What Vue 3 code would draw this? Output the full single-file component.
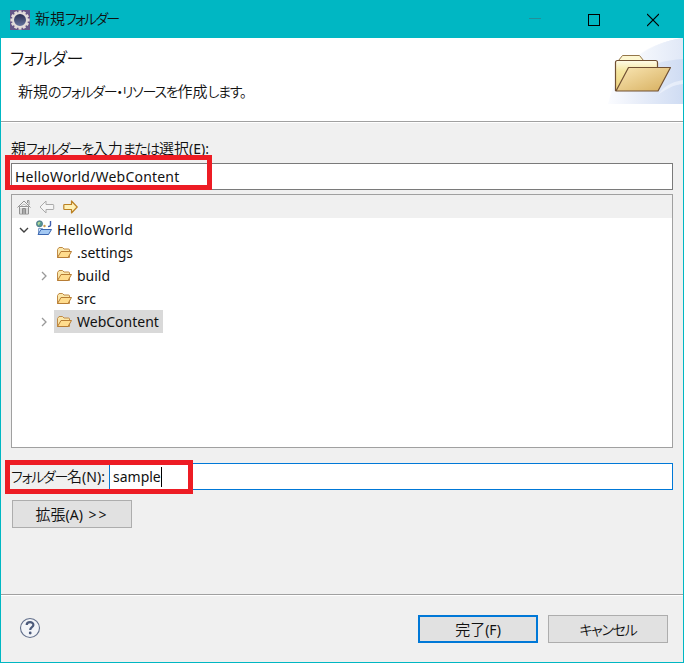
<script setup>
const rows = [
  { name: '.settings', open: false },
  { name: 'build', open: true },
  { name: 'src', open: false },
  { name: 'WebContent', open: true, selected: true },
]
const teeth = Array.from({ length: 12 }, (_, i) => i * 30)
</script>

<template>
  <div class="dialog">
    <header class="titlebar">
      <svg class="appicon" width="20" height="20" viewBox="0 0 20 20">
        <defs>
          <linearGradient id="lens" x1="0" y1="0" x2="0" y2="1">
            <stop offset="0" stop-color="#252a4c" /><stop offset="1" stop-color="#6878a4" />
          </linearGradient>
        </defs>
        <rect width="20" height="20" fill="#655788" />
        <rect v-for="a in teeth" :key="a" x="8.5" y="0.4" width="3" height="4" fill="#e2dcda" :transform="`rotate(${a} 10 10)`" />
        <circle cx="10" cy="10" r="7" fill="url(#lens)" stroke="#e2dcda" stroke-width="2" />
      </svg>
      <span class="title">新規<span class="kana">フォルダー</span></span>
      <div class="controls">
        <svg width="12" height="14" viewBox="0 0 12 14"><path d="M0 5.500h12" stroke="#238f99" /></svg>
        <svg width="12" height="14" viewBox="0 0 12 14"><rect x=".5" y="1.500" width="11" height="11" fill="none" stroke="#000" /></svg>
        <svg width="12" height="14" viewBox="0 0 12 14"><path d="M0 1l12 12M12 1L0 13" stroke="#000" stroke-width="1.100" /></svg>
      </div>
    </header>

    <section class="banner">
      <div class="banner-text">
        <div class="heading">フォルダー</div>
        <div class="description">新規<span class="kana">のフォルダー・リソースを</span>作成<span class="kana">します。</span></div>
      </div>
      <svg class="banner-art" width="75" height="66" viewBox="0 0 75 66">
        <defs>
          <linearGradient id="sky" x1="0" y1="0" x2="1" y2="0">
            <stop offset="0" stop-color="#fbfcff" /><stop offset=".4" stop-color="#e9eef9" /><stop offset="1" stop-color="#cfdcf3" />
          </linearGradient>
          <linearGradient id="sheen" x1="0" y1="0" x2="1" y2="0">
            <stop offset="0" stop-color="#fff" /><stop offset="1" stop-color="#e6ecf8" />
          </linearGradient>
          <linearGradient id="back" x1="0" y1="0" x2="0" y2="1">
            <stop offset="0" stop-color="#fffce9" /><stop offset=".35" stop-color="#f5e6a0" /><stop offset="1" stop-color="#eed27e" />
          </linearGradient>
          <linearGradient id="front" x1="0" y1="0" x2="1" y2="1">
            <stop offset="0" stop-color="#fae7b5" /><stop offset="1" stop-color="#d6ae5d" />
          </linearGradient>
        </defs>
        <path d="M0 66C8 30 35 6 75 0v66z" fill="url(#sky)" />
        <path d="M20 25C38 9 55 3 75 0v21C57 22 42 26 25 37z" fill="url(#sheen)" opacity=".75" />
        <path d="M50 57C55 49 63 44 75 42v4c-10 1-17 5-25 11z" fill="#f4f7fd" opacity=".6" />
        <path d="M10.500 22.500l4-5h17l4 5z" fill="#fdf7d1" stroke="#94764a" />
        <path d="M7.500 52.500V24.500q0-2 2-2h38q2 0 2 2v28z" fill="url(#back)" stroke="#715033" stroke-width="1.200" />
        <path d="M8 53L20.500 29.500h42L50 53z" fill="url(#front)" stroke="#715033" stroke-width="1.200" stroke-linejoin="round" />
      </svg>
    </section>

    <main class="content">
      <div class="parent-label">親<span class="kana">フォルダーを</span>入力<span class="kana">または</span>選択<span class="latin">(E):</span></div>
      <div class="field parent-field">HelloWorld/WebContent<div class="mark mark-parent"></div></div>

      <div class="tree">
        <div class="toolbar">
          <svg width="16" height="16" viewBox="0 0 16 16">
            <path d="M3.500 15V7.500h9V15zM1.500 8.500L8 2l6.500 6.500M11.500 4V1.500h1.500V6" fill="#f6f6f6" stroke="#929292" />
            <path d="M6.500 15V9.500h3V15" fill="#aaa" stroke="#8b8b8b" /><path d="M5 7l3-2 3 2M5 9v5M11 9v5" fill="none" stroke="#bbb" />
          </svg>
          <svg width="16" height="16" viewBox="0 0 16 16"><path d="M1 8L7 2v3.500h7q.7 0 .7.700v3.600q0 .700-.7.700H7V14z" fill="#f5f5f5" stroke="#aaa" stroke-linejoin="round" /></svg>
          <svg width="16" height="16" viewBox="0 0 16 16"><path d="M15.200 8L9.500 2v3.500h-7q-.7 0-.7.700v3.600q0 .700.7.700h7V14z" fill="#fff1b7" stroke="#bb8123" stroke-width="1.200" stroke-linejoin="round" /></svg>
        </div>
        <div class="row root">
          <svg class="chevron" width="10" height="10" viewBox="0 0 10 10"><path d="M1 3l4 4 4-4" fill="none" stroke="#404040" stroke-width="1.400" /></svg>
          <svg class="project" width="16" height="16" viewBox="0 0 16 16">
            <path d="M2.500 14V8.500h4l1 1h5V14z" fill="#d6e7ff" stroke="#7d9dcb" />
            <path d="M2 14.500L5 9.500h10.500l-3 5z" fill="#a4c9f3" stroke="#3b66b0" stroke-linejoin="round" />
            <circle cx="3.500" cy="3.800" r="3.100" fill="#57978f" stroke="#436a88" stroke-width=".7" />
            <path d="M1.500 3.300q1-2 3-1l-1 2-1 1z" fill="#b4d89a" />
            <circle cx="8.500" cy="6" r="1.200" fill="#c99b4e" />
            <path d="M14.500 1v4q0 1.700-2.500 1.400" fill="none" stroke="#405eae" stroke-width="1.400" />
          </svg>
          <span class="name">HelloWorld</span>
        </div>
        <div v-for="row in rows" :key="row.name" class="row child">
          <svg class="chevron" width="10" height="10" viewBox="0 0 10 10"><path v-if="row.open" d="M3 1l4 4-4 4" fill="none" stroke="#999" stroke-width="1.300" /></svg>
          <span class="node" :class="{ selected: row.selected }">
            <svg width="16" height="16" viewBox="0 0 16 16">
              <path d="M1.500 12.500V4.500l1.500-2h3.500L8 4h4.500q1 0 1 1v7.500z" fill="#fbe7aa" stroke="#c08a45" />
              <path d="M1.500 12.500L5 6.500h10.500l-3.500 6z" fill="#ffdc8d" stroke="#b77d35" stroke-linejoin="round" />
            </svg>
            <span class="name">{{ row.name }}</span>
          </span>
        </div>
      </div>

      <div class="name-row">
        <div class="name-label"><span class="kana">フォルダー</span>名<span class="latin">(N):</span></div>
        <div class="field name-field">sample<i class="caret"></i></div>
        <div class="mark mark-name"></div>
      </div>
      <button class="button advanced">拡張<span class="latin">(A) <span class="arrows">&gt;&gt;</span></span></button>
    </main>

    <footer class="footer">
      <svg class="help" width="22" height="22" viewBox="0 0 22 22">
        <circle cx="11" cy="11" r="9.500" fill="#f2f4f8" stroke="#626f8b" stroke-width="1.100" />
        <path d="M7.700 8.100c0-3.900 6.700-3.900 6.700-.2 0 2.200-3.200 2.200-3.200 5" fill="none" stroke="#4c5a7b" stroke-width="2.200" />
        <circle cx="11.200" cy="16" r="1.400" fill="#4c5a7b" />
      </svg>
      <div class="actions">
        <button class="button primary">完了<span class="latin">(F)</span></button>
        <button class="button"><span class="kana">キャンセル</span></button>
      </div>
    </footer>
  </div>
</template>

<style>
body { margin: 0; }
</style>

<style scoped>
* { box-sizing: border-box; }
.dialog { width: 684px; height: 663px; display: flex; flex-direction: column; background: #f0f0f0; border: 1px solid #00b7c3; color: #111; font: 350 15px/22px "Noto Sans CJK JP", sans-serif; white-space: nowrap; }
svg { display: block; flex: none; }
.kana { font-size: 14px; font-feature-settings: "palt"; letter-spacing: -1.25px; }
.latin, .name, .field { font-family: "Noto Sans", sans-serif; font-weight: 400; font-size: 14px; }
.titlebar { height: 37px; flex: none; display: flex; align-items: center; padding-left: 9px; background: #00b7c3; }
.title { margin: -3px 0 0 5px; }
.title .kana { letter-spacing: -1.8px; }
.controls { margin-left: auto; display: flex; gap: 47px; padding-right: 24px; }
.banner { height: 84px; flex: none; display: flex; justify-content: space-between; background: #fff; border-bottom: 1px solid #a0a0a0; }
.banner-text { padding: 9px 0 0 9px; }
.heading { font-size: 17px; font-feature-settings: "palt"; letter-spacing: -.6px; }
.description { margin: 11px 0 0 8px; }
.content { flex: 1; padding: 15px 10px 0; border-top: 1px solid #fff; }
.parent-label { height: 25px; line-height: 20px; }
.parent-label .kana { letter-spacing: -1.4px; }
.field { position: relative; height: 27px; padding-left: 3px; display: flex; align-items: center; background: #fff; border: 1px solid #7a7a7a; }
.parent-field { letter-spacing: .2px; }
.mark { position: absolute; border: 5px solid #ed1c24; }
.mark-parent { left: -7px; top: -9px; width: 207px; height: 35px; }
.tree { height: 254px; margin-top: 4px; border: 1px solid #a0a0a0; background: #fff; }
.toolbar { height: 23px; display: flex; align-items: center; gap: 7px; padding-left: 4px; background: #f0f0f0; }
.row { height: 23px; display: flex; align-items: center; }
.root { padding-left: 7px; }
.root .name { letter-spacing: .3px; }
.project { margin: -3px 5px 0 7px; }
.child { padding-left: 27px; }
.node { height: 23px; display: flex; align-items: center; gap: 5px; margin-left: 5px; padding: 0 4px 0 2px; }
.selected { background: #d9d9d9; }
.name-row { position: relative; display: flex; align-items: center; margin-top: 15px; }
.name-label { width: 98px; line-height: 20px; }
.name-field { flex: 1; border-color: #0078d7; }
.caret { width: 1px; height: 20px; background: #000; }
.mark-name { left: -6px; top: -3px; width: 188px; height: 34px; }
.button { width: 120px; height: 28px; padding: 0; background: #e1e1e1; border: 1px solid #adadad; color: #111; font: inherit; line-height: 24px; }
.advanced { display: block; margin: 10px 0 0 1px; }
.arrows { margin-left: 2px; letter-spacing: 2px; }
.footer { height: 68px; flex: none; display: flex; align-items: center; justify-content: space-between; padding: 0 15px 0 18px; border-top: 1px solid #a0a0a0; box-shadow: inset 0 1px #fff; }
.help { margin-top: -2px; }
.actions { display: flex; gap: 10px; }
.primary { border: 2px solid #0078d7; }
</style>
